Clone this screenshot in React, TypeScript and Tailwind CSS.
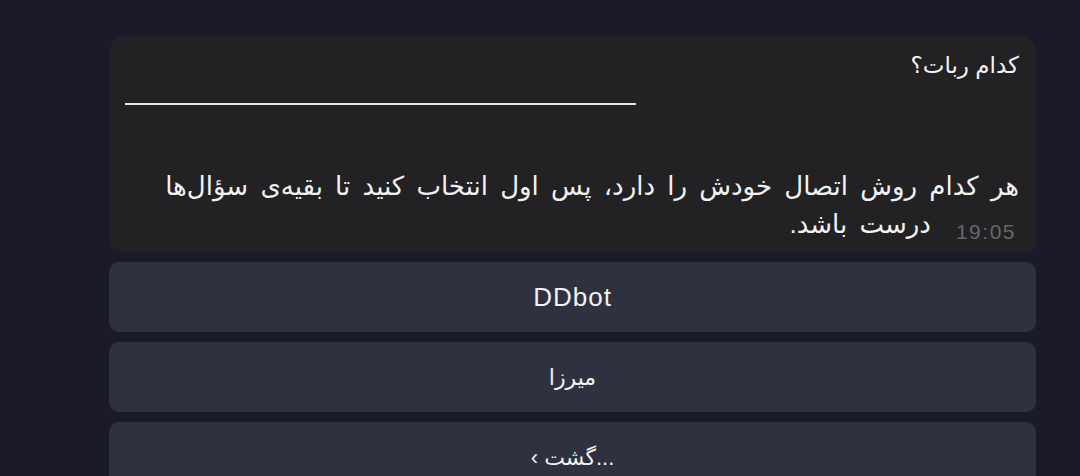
import React from 'react';

const buttons = ['DDbot', 'میرزا', '...گشت ›'];

const App: React.FC = () => {
  return (
    <div
      className="h-[476px] w-full overflow-hidden bg-[#1a1a2b] pt-[35px] pl-[109px] pr-[44px]"
      style={{ fontFamily: '"Liberation Sans", "DejaVu Sans", sans-serif' }}
    >
      <div className="flex flex-col gap-[10px]">
        {/* message bubble */}
        <div
          dir="rtl"
          className="flex flex-col rounded-t-[18px] rounded-b-[10px] bg-[#222124] pt-[12px] pb-[9px] pr-[17px] pl-[16px] text-[#f2f2f2]"
        >
          <div className="text-[23px] leading-[36px]">کدام ربات؟</div>
          <div className="mt-[20px] h-[2px] w-[511px] self-end bg-[#e4e4e4]" />
          <div className="mt-[62px] text-[26px] leading-[38px] [word-spacing:5px]">
            هر کدام روش اتصال خودش را دارد، پس اول انتخاب کنید تا بقیه‌ی سؤال‌ها
          </div>
          <div className="flex items-center text-[26px] leading-[38px] [word-spacing:5px]">
            <span
              className="mr-[3px] ml-[25px] pt-[16px] text-[21px] leading-[22px] tracking-[1.5px] text-[#67666c]"
              dir="ltr"
            >
              19:05
            </span>
            <span>درست باشد.</span>
          </div>
        </div>

        {/* inline keyboard */}
        {buttons.map((label) => (
          <div
            key={label}
            dir="rtl"
            className="flex h-[70px] shrink-0 items-center justify-center rounded-[10px] bg-[#2d3140] text-[#f2f2f2]"
          >
            <span className={label === 'DDbot' ? 'text-[26px] tracking-[1px]' : 'text-[22px]'}>{label}</span>
          </div>
        ))}
      </div>
    </div>
  );
};

export default App;
